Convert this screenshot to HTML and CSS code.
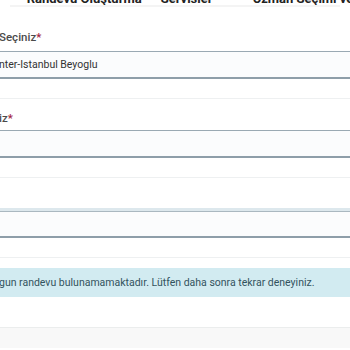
FILE: index.html
```html
<!DOCTYPE html>
<html lang="tr">
<head>
    <meta charset="UTF-8">
    <meta name="viewport" content="width=device-width, initial-scale=1.0">
    <title>Randevu</title>
    <link rel="stylesheet" href="styles.css">
</head>
<body>
    <!-- Steps -->
    <div class="stepper">
        <div class="step step-one"><span class="dot">•</span>Randevu Oluşturma</div>
        <div class="step step-two"><span class="dot">•</span>Servisler</div>
        <div class="step step-three"><span class="dot">•</span>Uzman Seçimi ve Saat</div>
    </div>
    <div class="step-sub"></div>

    <!-- Form -->
    <div class="form">
        <div class="field">
            <label class="label">Seçiniz<span class="req">*</span></label>
            <div class="select">nter-Istanbul Beyoglu</div>
        </div>
        <div class="divider"></div>

        <div class="field">
            <label class="label">iz<span class="req">*</span></label>
            <div class="select"></div>
        </div>
        <div class="divider"></div>

        <div class="field field-nolabel">
            <div class="select select-focus"></div>
        </div>
        <div class="divider"></div>

        <div class="alert">gun randevu bulunamamaktadır. Lütfen daha sonra tekrar deneyiniz.</div>
        <div class="divider divider-last"></div>
        <div class="footer-band"></div>
    </div>
</body>
</html>
```

FILE: styles.css
```css
body {
    margin: 0;
    font-family: Roboto, "Noto Sans", Arial, sans-serif;
    background: #fff;
    color: #333;
    overflow: hidden;
}

/* Steps */
.stepper {
    display: flex;
    margin-top: -8px;
    height: 13px;
    font-size: 13px;
    font-weight: 700;
    color: #222;
    white-space: nowrap;
    overflow: hidden;
}
.step { flex: none; line-height: 13px; }
.step .dot { margin-right: 8px; }
.step-one { padding-left: 14px; width: 134px; }
.step-two { width: 92px; }
.step-three { padding-left: 0; }
.step-sub {
    height: 2px;
    margin: 0 10px;
    background: #f4f4f4;
}

/* Form */
.form { padding-top: 23px; }
.field { display: flex; flex-direction: column; }
.field-nolabel { padding-top: 20px; }
.label {
    font-size: 11.5px;
    font-weight: 500;
    color: #4a4a4a;
    line-height: 14px;
    margin-bottom: 7px;
    margin-left: -1px;
}
.req { color: #a2243f; }
.select {
    height: 25px;
    border-top: 1px solid #9aa9b3;
    border-bottom: 2px solid #8e9ea9;
    background: #fbfcfd;
    font-size: 10.5px;
    line-height: 26px;
    color: #333;
    margin-left: -1px;
}
.select-focus {
    border-top: 3px solid #dde8ed;
    box-shadow: inset 0 1px 0 #aab8c0;
    height: 25px;
}
.divider {
    height: 1px;
    background: #eef0f1;
    margin: 19px 0 10px;
}
.field + .divider + .field .label { margin-top: 2px; margin-bottom: 5px; }
.alert {
    background: #d2ebf1;
    color: #33535e;
    font-size: 10.5px;
    height: 29px;
    line-height: 30px;
    margin-top: 6px;
    margin-left: -1px;
    white-space: nowrap;
}
.divider-last { margin: 30px 0 0; background: #ebeded; }
.footer-band { height: 20px; background: #f8f8f8; }
```
